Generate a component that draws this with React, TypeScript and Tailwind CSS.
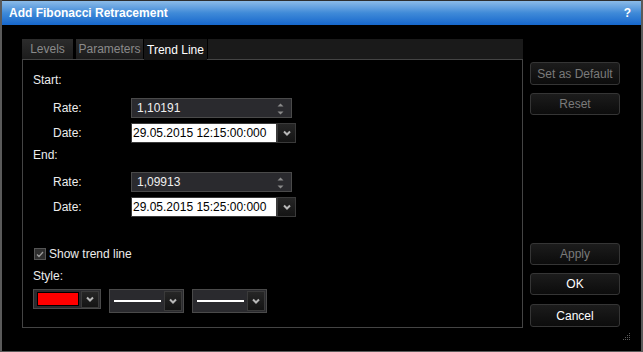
import React from "react";

function Chevron() {
  return (
    <svg width="8" height="6" viewBox="0 0 8 6" className="block">
      <path d="M1 1.5 L4 4.5 L7 1.5" fill="none" stroke="#b8b8b8" strokeWidth="2" />
    </svg>
  );
}

function DropButton({ className = "" }: { className?: string }) {
  return (
    <div
      className={
        "flex items-center justify-center border border-[#3a3a3a] bg-gradient-to-b from-[#262626] to-[#141414] " +
        className
      }
    >
      <Chevron />
    </div>
  );
}

function RateInput({ value }: { value: string }) {
  return (
    <div className="relative flex h-[20px] w-[161px] items-center border border-[#4a4a4a] bg-[#2a2a2e] pl-[5px] text-[12px] text-[#f0f0f0]">
      {value}
      <svg width="7" height="12" viewBox="0 0 7 12" className="absolute right-[7px] top-[4px]">
        <path d="M0.5 3.5 L3.5 0.5 L6.5 3.5 Z" fill="#8a8a8a" />
        <path d="M0.5 8.5 L3.5 11.5 L6.5 8.5 Z" fill="#8a8a8a" />
      </svg>
    </div>
  );
}

function DateInput({ value }: { value: string }) {
  return (
    <div className="flex h-[20px] w-[165px]">
      <div className="flex h-full w-[146px] items-center border border-[#3a3a3a] bg-white pl-[1px] text-[12px] text-black">
        {value}
      </div>
      <DropButton className="h-full w-[19px]" />
    </div>
  );
}

function Row({ label, children, className = "" }: { label: string; children: React.ReactNode; className?: string }) {
  return (
    <div className={"flex h-[20px] items-center " + className}>
      <span className="w-[98px] pl-[20px] text-[12px] text-[#ececec]">{label}</span>
      {children}
    </div>
  );
}

function LineCombo() {
  return (
    <div className="flex h-[24px] w-[75px] items-center border border-[#4a4a4a] bg-[#2a2a2e] pl-[4px]">
      <div className="h-[2px] w-[47px] bg-white" />
      <DropButton className="ml-auto mr-[1px] h-[20px] w-[18px]" />
    </div>
  );
}

function SideButton({ label, enabled = false, className = "" }: { label: string; enabled?: boolean; className?: string }) {
  return (
    <div
      className={
        "flex w-[90px] items-center justify-center rounded-[3px] border border-[#353535] bg-gradient-to-b from-[#1c1c1c] to-[#0c0c0c] text-[12px] " +
        (enabled ? "text-white " : "text-[#7a7a7a] ") +
        className
      }
    >
      {label}
    </div>
  );
}

export default function App() {
  return (
    <div className="relative flex h-[352px] w-[643px] flex-col border-x-2 border-b border-[#5a5a5a] bg-black font-['Liberation_Sans',Arial,sans-serif]">
      {/* Title bar */}
      <div className="flex h-[25px] shrink-0 items-center border-t border-[#2e2e2e] bg-gradient-to-b from-[#8bbbe8] via-[#3f8ad8] to-[#1567cc] px-[7px] text-[12px] font-bold text-white">
        <span>Add Fibonacci Retracement</span>
        <span className="ml-auto mr-[3px]">?</span>
      </div>

      <div className="flex flex-1 pl-[20px] pt-[14px]">
        {/* Left: tabs + panel */}
        <div className="flex w-[501px] flex-col">
          <div className="flex h-[21px] text-[12px]">
            <div className="flex w-[51px] items-center justify-center border-b border-[#444] bg-gradient-to-b from-[#2c2c2c] to-[#1c1c1c] text-[#8a8a8a]">
              Levels
            </div>
            <div className="w-[3px] border-b border-[#444]" />
            <div className="flex w-[67px] items-center justify-center border-b border-[#444] bg-gradient-to-b from-[#2c2c2c] to-[#1c1c1c] text-[#8a8a8a]">
              Parameters
            </div>
            <div className="w-[1px] border-b border-[#444]" />
            <div className="flex w-[63px] items-center justify-center bg-[#161616] text-white">Trend Line</div>
            <div className="w-[1px] border-b border-[#444] bg-black" />
            <div className="flex-1 border-b border-[#444] bg-[#1a1a1a]" />
          </div>

          <div className="flex h-[268px] flex-col border-x border-b border-[#444] pl-[10px] pt-[10px]">
            <div className="flex h-[20px] items-center text-[12px] text-[#ececec]">Start:</div>
            <Row label="Rate:" className="mt-[8px]">
              <RateInput value="1,10191" />
            </Row>
            <Row label="Date:" className="mt-[5px]">
              <DateInput value="29.05.2015 12:15:00:000" />
            </Row>
            <div className="mt-[2px] flex h-[20px] items-center text-[12px] text-[#ececec]">End:</div>
            <Row label="Rate:" className="mt-[7px]">
              <RateInput value="1,09913" />
            </Row>
            <Row label="Date:" className="mt-[5px]">
              <DateInput value="29.05.2015 15:25:00:000" />
            </Row>

            <div className="mt-[27px] flex h-[20px] items-center text-[12px] text-[#ececec]">
              <div className="ml-[1px] mr-[3px] flex h-[12px] w-[12px] items-center justify-center border border-[#555] bg-[#2e2e2e]">
                <svg width="8" height="7" viewBox="0 0 8 7">
                  <path d="M1 3.5 L3 5.5 L7 1" fill="none" stroke="#9a9a9a" strokeWidth="1.3" />
                </svg>
              </div>
              Show trend line
            </div>
            <div className="mt-[2px] flex h-[20px] items-center text-[12px] text-[#ececec]">Style:</div>

            <div className="mt-[3px] flex items-start gap-[8px]">
              <div className="flex h-[20px] w-[68px] items-center border border-[#4a4a4a] bg-[#2a2a2e] pl-[3px]">
                <div className="h-[14px] w-[42px] border border-black bg-[#ff0000]" />
                <DropButton className="ml-auto mr-[1px] h-[17px] w-[18px]" />
              </div>
              <LineCombo />
              <LineCombo />
            </div>
          </div>
        </div>

        {/* Right: buttons */}
        <div className="ml-[7px] flex flex-col">
          <SideButton label="Set as Default" className="mt-[23px] h-[23px]" />
          <SideButton label="Reset" className="mt-[8px] h-[22px]" />
          <SideButton label="Apply" className="mt-[128px] h-[22px]" />
          <SideButton label="OK" enabled className="mt-[8px] h-[22px]" />
          <SideButton label="Cancel" enabled className="mt-[9px] h-[23px]" />
        </div>
      </div>

      {/* Resize grip */}
      <svg width="9" height="9" viewBox="0 0 9 9" className="absolute bottom-[10px] right-[10px]">
        {[
          [7, 1],
          [5, 3], [7, 3],
          [3, 5], [5, 5], [7, 5],
          [1, 7], [3, 7], [5, 7], [7, 7],
        ].map(([x, y]) => (
          <rect key={`${x}-${y}`} x={x} y={y} width="1" height="1" fill="#5a5a5a" />
        ))}
      </svg>
    </div>
  );
}
